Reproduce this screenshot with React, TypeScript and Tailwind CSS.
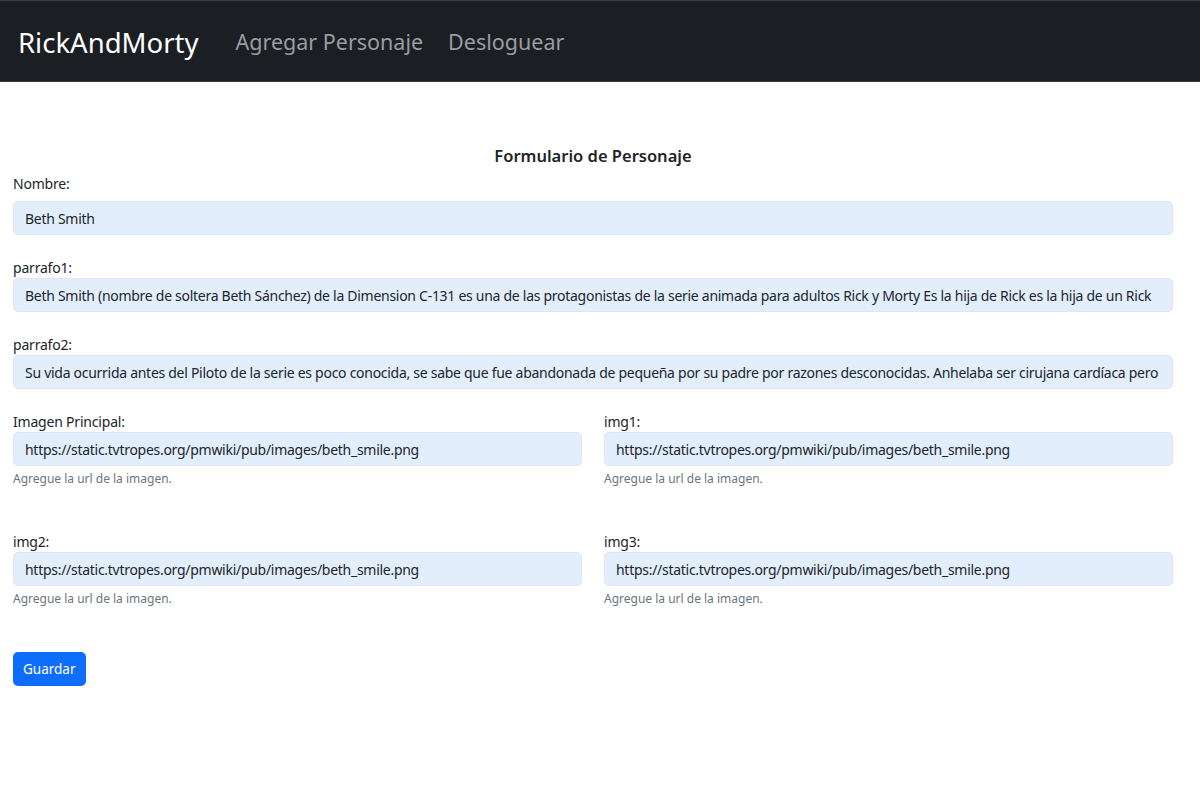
const url = "https://static.tvtropes.org/pmwiki/pub/images/beth_smile.png";

const inputCls =
  "block h-[34px] w-full rounded-[5px] border border-[#dee6f2] bg-[#e3eefc] px-[11px] text-[14px] tracking-[-0.28px] text-[#212529] outline-none";

function Field({ label, value, gap = "" }: { label: string; value: string; gap?: string }) {
  return (
    <label className="block text-[14px] leading-[20px] tracking-[-0.2px] text-[#212529]">
      <span className={"block " + gap}>{label}</span>
      <input readOnly value={value} className={inputCls} />
    </label>
  );
}

function ImgField({ label }: { label: string }) {
  return (
    <div>
      <Field label={label} value={url} />
      <p className="mt-[4px] text-[12px] leading-[18px] text-[#6c757d]">Agregue la url de la imagen.</p>
    </div>
  );
}

export default function App() {
  return (
    <div className="min-h-[800px] bg-white" style={{ fontFamily: '"Noto Sans", "Open Sans", sans-serif' }}>
      <nav className="flex h-[82px] items-center border-b border-t border-[#3a3f44] bg-[#1b1f23] px-[18px] pt-[3px]">
        <span className="text-[27.5px] text-white">RickAndMorty</span>
        <div className="ml-[37px] flex gap-[25px] text-[21.5px] text-[#9a9da0]">
          <span>Agregar Personaje</span>
          <span>Desloguear</span>
        </div>
      </nav>

      <form className="px-[13px] pr-[27px] pt-[63px]">
        <h2 className="text-center text-[16.5px] font-semibold leading-[22px] text-[#212529]">Formulario de Personaje</h2>
        <div className="mt-[7px] flex flex-col gap-[23px]">
          <Field label="Nombre:" value="Beth Smith" gap="mb-[7px]" />
          <Field
            label="parrafo1:"
            value="Beth Smith (nombre de soltera Beth Sánchez) de la Dimension C-131 es una de las protagonistas de la serie animada para adultos Rick y Morty Es la hija de Rick es la hija de un Rick"
          />
          <Field
            label="parrafo2:"
            value="Su vida ocurrida antes del Piloto de la serie es poco conocida, se sabe que fue abandonada de pequeña por su padre por razones desconocidas. Anhelaba ser cirujana cardíaca pero"
          />
        </div>
        <div className="mt-[23px] grid grid-cols-2 gap-x-[22px] gap-y-[44px]">
          <ImgField label="Imagen Principal:" />
          <ImgField label="img1:" />
          <ImgField label="img2:" />
          <ImgField label="img3:" />
        </div>
        <button type="button" className="mt-[44px] h-[34px] rounded-[5px] bg-[#0d6efd] px-[10px] text-[13.5px] text-white">
          Guardar
        </button>
      </form>
    </div>
  );
}
